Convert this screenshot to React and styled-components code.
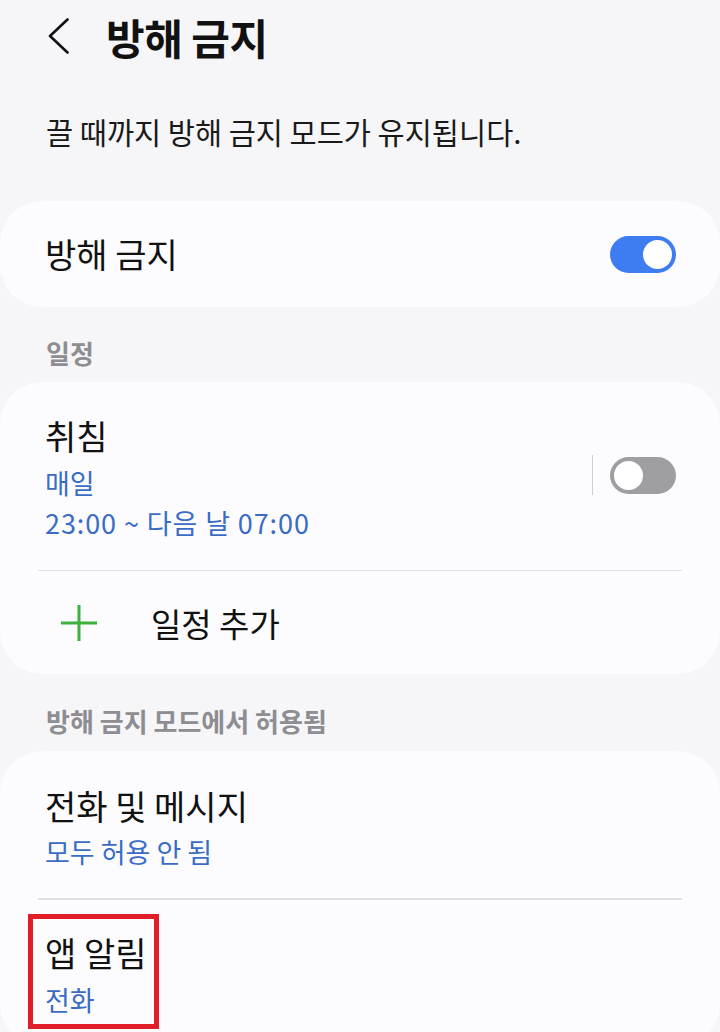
import React from "react";
import styled, { createGlobalStyle } from "styled-components";

const Global = createGlobalStyle`
  html, body { margin: 0; padding: 0; background: #f6f6f8; }
  body { font-family: "Noto Sans CJK KR", "Noto Sans", sans-serif; color: #111; }
  * { box-sizing: border-box; }
`;

const Page = styled.div`
  min-height: 1032px;
  background: #f6f6f8;
  padding-top: 13px;
  overflow: hidden;
`;

const Header = styled.div`
  display: flex;
  align-items: center;
  height: 48px;
  padding-left: 48px;
  gap: 36px;
`;

const BackIcon = styled.svg`
  width: 22px;
  height: 36px;
  flex: none;
  margin-top: -3px;
`;

const Title = styled.h1`
  margin: 0;
  font-size: 42px;
  line-height: 48px;
  font-weight: 700;
  color: #111;
  letter-spacing: -0.5px;
`;

const Description = styled.p`
  margin: 52px 0 0;
  padding-left: 46px;
  font-size: 29.5px;
  line-height: 36px;
  color: #1a1a1a;
`;

const Card = styled.div`
  background: #fcfcfe;
  border-radius: 42px;
  margin-top: ${(p) => p.$mt || 0}px;
`;

const SwitchRow = styled.div`
  display: flex;
  align-items: center;
  justify-content: space-between;
  height: 106px;
  padding: 0 44px 0 45px;
  font-size: 34px;
  line-height: 40px;
`;

const SectionLabel = styled.div`
  margin-top: ${(p) => p.$mt}px;
  padding-left: 46px;
  font-size: 26px;
  line-height: 32px;
  font-weight: 600;
  color: #8d8d92;
`;

const ItemRow = styled.div`
  position: relative;
  display: flex;
  align-items: center;
  justify-content: space-between;
  padding: ${(p) => p.$pt}px 44px ${(p) => p.$pb}px 45px;
`;

const ItemText = styled.div`
  display: flex;
  flex-direction: column;
`;

const ItemTitle = styled.div`
  font-size: 34px;
  line-height: 40px;
  color: #111;
`;

const ItemSub = styled.div`
  font-size: 27px;
  line-height: 40px;
  color: #3a6cc6;
  letter-spacing: ${(p) => (p.$spaced ? "0.9px" : "0")};
  ${ItemTitle} + & { margin-top: 6.5px; }
`;

const Divider = styled.div`
  height: 1.5px;
  margin: 0 38px;
  background: #e1e1e4;
`;

const ToggleGroup = styled.div`
  display: flex;
  align-items: center;
  gap: 17px;
  margin-bottom: 8px;
`;

const VLine = styled.div`
  width: 1.5px;
  height: 40px;
  background: #cfcfd2;
`;

const Track = styled.div`
  position: relative;
  width: 66px;
  height: 37px;
  border-radius: 19px;
  background: ${(p) => (p.$on ? "#3d7cf1" : "#9e9ea3")};
  flex: none;
`;

const Knob = styled.div`
  position: absolute;
  top: 4px;
  ${(p) => (p.$on ? "right: 4px;" : "left: 4px;")}
  width: 29px;
  height: 29px;
  border-radius: 50%;
  background: #fff;
`;

const AddRow = styled.div`
  display: flex;
  align-items: center;
  height: 103px;
  padding-left: 60px;
  gap: 53px;
  font-size: 33px;
  line-height: 40px;
  color: #111;
`;

const PlusIcon = styled.svg`
  width: 38px;
  height: 38px;
  flex: none;
`;

const Highlight = styled.div`
  position: absolute;
  left: 28px;
  top: 14px;
  width: 131px;
  height: 115px;
  border: 5px solid #e11d27;
  pointer-events: none;
`;

const Toggle = ({ on }) => (
  <Track $on={on}>
    <Knob $on={on} />
  </Track>
);

export default function App() {
  return (
    <>
      <Global />
      <Page>
        <Header>
          <BackIcon viewBox="0 0 22 36">
            <path d="M19.5 1.5 L2 18 L19.5 34.5" fill="none" stroke="#111" strokeWidth="2.6" strokeLinecap="round" strokeLinejoin="round" />
          </BackIcon>
          <Title>방해 금지</Title>
        </Header>
        <Description>끌 때까지 방해 금지 모드가 유지됩니다.</Description>

        <Card $mt={52}>
          <SwitchRow>
            <span>방해 금지</span>
            <Toggle on />
          </SwitchRow>
        </Card>

        <SectionLabel $mt={30}>일정</SectionLabel>
        <Card $mt={13}>
          <ItemRow $pt={34} $pb={27}>
            <ItemText>
              <ItemTitle>취침</ItemTitle>
              <ItemSub>매일</ItemSub>
              <ItemSub $spaced>23:00 ~ 다음 날 07:00</ItemSub>
            </ItemText>
            <ToggleGroup>
              <VLine />
              <Toggle on={false} />
            </ToggleGroup>
          </ItemRow>
          <Divider />
          <AddRow>
            <PlusIcon viewBox="0 0 38 38">
              <path d="M19 1 V37 M1 19 H37" stroke="#3cb23c" strokeWidth="3" fill="none" />
            </PlusIcon>
            <span>일정 추가</span>
          </AddRow>
        </Card>

        <SectionLabel $mt={31}>방해 금지 모드에서 허용됨</SectionLabel>
        <Card $mt={14}>
          <ItemRow $pt={34.5} $pb={26}>
            <ItemText>
              <ItemTitle>전화 및 메시지</ItemTitle>
              <ItemSub>모두 허용 안 됨</ItemSub>
            </ItemText>
          </ItemRow>
          <Divider />
          <ItemRow $pt={33.5} $pb={26}>
            <ItemText>
              <ItemTitle>앱 알림</ItemTitle>
              <ItemSub>전화</ItemSub>
            </ItemText>
            <Highlight />
          </ItemRow>
        </Card>
      </Page>
    </>
  );
}
